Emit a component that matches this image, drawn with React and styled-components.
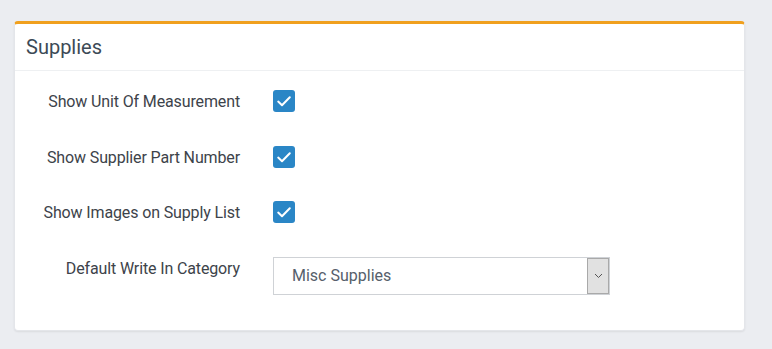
import React from "react";
import styled, { createGlobalStyle } from "styled-components";

const Global = createGlobalStyle`
  html, body { margin: 0; padding: 0; background: #ebedf1; }
  body { font-family: Roboto, "Liberation Sans", sans-serif; }
  * { box-sizing: border-box; }
`;

const Page = styled.div`
  padding: 21px 27px 17px 14px;
`;

const Card = styled.section`
  background: #fff;
  border: 1px solid #e4e6ea;
  border-top: 3px solid #f0a01e;
  border-radius: 4px;
  box-shadow: 0 1px 2px rgba(0, 0, 0, 0.08);
`;

const Header = styled.div`
  height: 47px;
  padding: 0 11px;
  display: flex;
  align-items: center;
  border-bottom: 1px solid #eef0f2;
`;

const Title = styled.h2`
  margin: 0;
  font-size: 20px;
  font-weight: 400;
  color: #3c4a56;
`;

const Body = styled.div`
  padding: 19px 0 35px;
  display: flex;
  flex-direction: column;
  gap: 33.5px;
`;

const Row = styled.div`
  display: flex;
  align-items: ${(p) => (p.$top ? "flex-start" : "center")};
`;

const Label = styled.label`
  width: 225px;
  text-align: right;
  font-size: 16px;
  letter-spacing: -0.13px;
  line-height: 23px;
  height: 22px;
  color: #3d434a;
  flex-shrink: 0;
`;

const Control = styled.div`
  margin-left: 33px;
  display: flex;
`;

const Box = styled.span`
  width: 22px;
  height: 22px;
  border-radius: 3px;
  background: #2a86c6;
  display: flex;
`;

const Select = styled.div`
  width: 337px;
  height: 38px;
  border: 1px solid #cfd2d6;
  display: flex;
  align-items: stretch;
  background: #fff;
`;

const Value = styled.span`
  flex: 1;
  padding-left: 18px;
  display: flex;
  align-items: center;
  font-size: 16px;
  color: #56606b;
`;

const Arrow = styled.span`
  width: 22px;
  background: #e1e1e1;
  border: 1px solid #a9a9a9;
  display: flex;
  align-items: center;
  justify-content: center;
`;

const Check = () => (
  <Box>
    <svg width="22" height="22" viewBox="0 0 22 22">
      <path d="M5.2 11.6 L9 15.2 L16.8 7.2" fill="none" stroke="#fff" strokeWidth="2" strokeLinecap="round" strokeLinejoin="round" />
    </svg>
  </Box>
);

const rows = [
  "Show Unit Of Measurement",
  "Show Supplier Part Number",
  "Show Images on Supply List",
];

export default function App() {
  return (
    <>
      <Global />
      <Page>
        <Card>
          <Header>
            <Title>Supplies</Title>
          </Header>
          <Body>
            {rows.map((r) => (
              <Row key={r}>
                <Label>{r}</Label>
                <Control>
                  <Check />
                </Control>
              </Row>
            ))}
            <Row $top>
              <Label>Default Write In Category</Label>
              <Control>
                <Select>
                  <Value>Misc Supplies</Value>
                  <Arrow>
                    <svg width="9" height="6" viewBox="0 0 9 6">
                      <path d="M1 1 L4.5 4.5 L8 1" fill="none" stroke="#555" strokeWidth="1" />
                    </svg>
                  </Arrow>
                </Select>
              </Control>
            </Row>
          </Body>
        </Card>
      </Page>
    </>
  );
}
